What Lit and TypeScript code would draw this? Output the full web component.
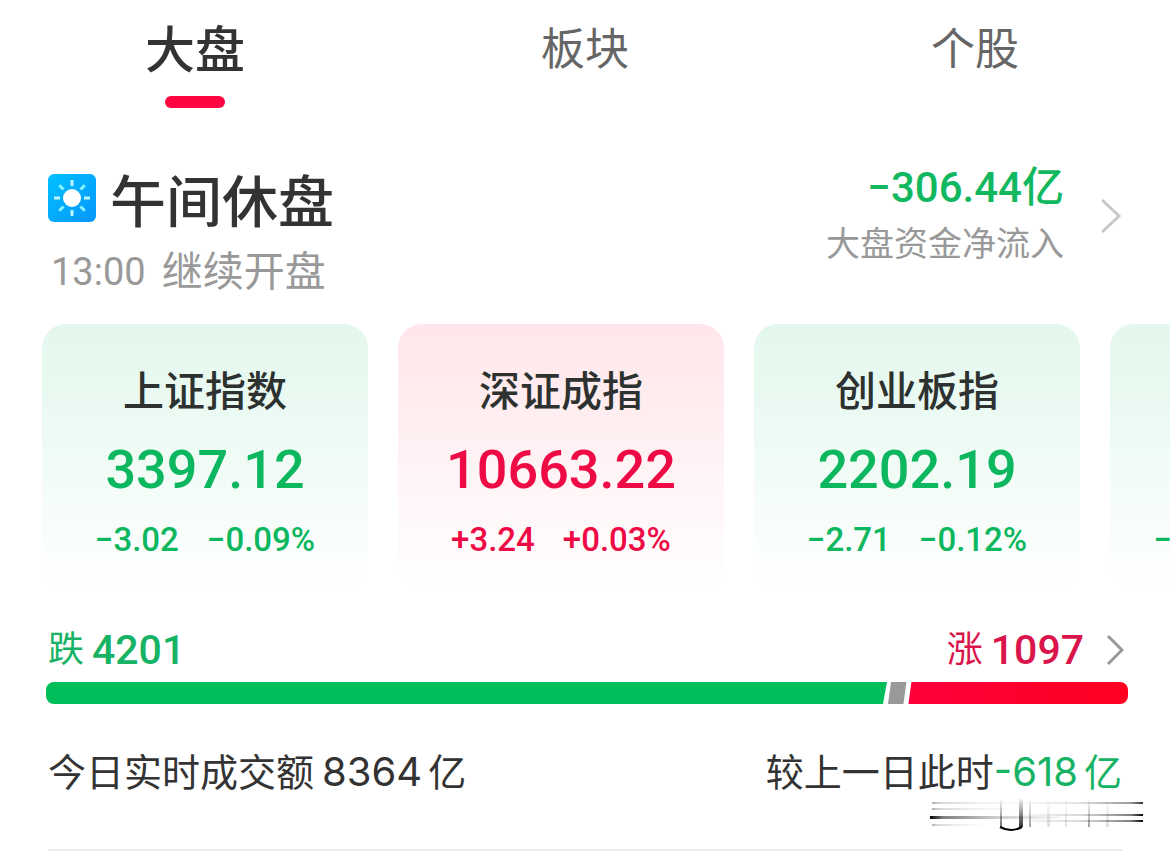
import { LitElement, html, css, svg } from "lit";
import { customElement, property, state } from "lit/decorators.js";
import { classMap } from "lit/directives/class-map.js";
import { styleMap } from "lit/directives/style-map.js";

interface MarketIndex {
  name: string;
  value: string;
  change: string;
  percent: string;
  rising: boolean;
}

const INDICES: MarketIndex[] = [
  { name: "上证指数", value: "3397.12", change: "−3.02", percent: "−0.09%", rising: false },
  { name: "深证成指", value: "10663.22", change: "+3.24", percent: "+0.03%", rising: true },
  { name: "创业板指", value: "2202.19", change: "−2.71", percent: "−0.12%", rising: false },
  { name: "北证50", value: "1409.52", change: "−13.26", percent: "−0.93%", rising: false },
];

const TABS = ["大盘", "板块", "个股"];

@customElement("index-card")
export class IndexCard extends LitElement {
  @property({ attribute: false }) item!: MarketIndex;

  static styles = css`
    :host {
      display: block;
      flex: 0 0 326px;
    }
    .card {
      display: flex;
      flex-direction: column;
      align-items: center;
      box-sizing: border-box;
      padding: 40px 0 30px;
      border-radius: 24px;
      color: #0db75f;
      background: linear-gradient(#e4f7ed, #eafaf2 30%, #ffffff);
      font-family: Roboto, "Noto Sans CJK SC", sans-serif;
      font-weight: 500;
      white-space: nowrap;
    }
    .card.rising {
      color: #ee0a45;
      background: linear-gradient(#ffe6ea, #ffedf0 30%, #ffffff);
    }
    .name {
      margin: 0;
      font-family: "Noto Sans CJK SC", sans-serif;
      font-size: 41px;
      line-height: 48px;
      font-weight: 500;
      color: #2d3230;
    }
    .value {
      margin-top: 28px;
      font-size: 54px;
      line-height: 60px;
    }
    .delta {
      display: flex;
      gap: 28px;
      margin-top: 20px;
      font-size: 33px;
      line-height: 40px;
    }
  `;

  render() {
    const { name, value, change, percent, rising } = this.item;
    return html`
      <article class=${classMap({ card: true, rising })}>
        <h2 class="name">${name}</h2>
        <div class="value">${value}</div>
        <div class="delta"><span>${change}</span><span>${percent}</span></div>
      </article>
    `;
  }
}

@customElement("breadth-bar")
export class BreadthBar extends LitElement {
  @property({ type: Number }) falling = 0;
  @property({ type: Number }) flat = 0;
  @property({ type: Number }) rising = 0;

  static styles = css`
    :host {
      display: block;
    }
    .bar {
      display: flex;
      gap: 1px;
      height: 22px;
      border-radius: 8px;
      overflow: hidden;
    }
    .segment {
      flex-basis: 0;
    }
    .falling {
      background: #00be5a;
      clip-path: polygon(0 0, 100% 0, calc(100% - 4px) 100%, 0 100%);
    }
    .flat {
      background: #999999;
      clip-path: polygon(3px 0, calc(100% - 1px) 0, calc(100% - 4px) 100%, 0 100%);
    }
    .rising {
      background: linear-gradient(90deg, #ff003c, #ff0020);
      clip-path: polygon(3px 0, 100% 0, 100% 100%, 0 100%);
    }
  `;

  render() {
    return html`
      <div class="bar">
        <div class="segment falling" style=${styleMap({ flexGrow: String(this.falling) })}></div>
        <div class="segment flat" style=${styleMap({ flexGrow: String(this.flat) })}></div>
        <div class="segment rising" style=${styleMap({ flexGrow: String(this.rising) })}></div>
      </div>
    `;
  }
}

@customElement("app-root")
export class AppRoot extends LitElement {
  @state() private active = 0;

  static styles = css`
    :host {
      display: block;
      position: relative;
      overflow: hidden;
      background: #ffffff;
      color: #333333;
      font-family: Roboto, "Noto Sans CJK SC", sans-serif;
    }
    button {
      padding: 0;
      border: 0;
      background: none;
      color: inherit;
      font: inherit;
      cursor: pointer;
    }
    .tabs {
      display: flex;
    }
    .tab {
      display: flex;
      flex: 1;
      flex-direction: column;
      align-items: center;
      gap: 4px;
      font-family: "Noto Sans CJK SC", sans-serif;
      font-size: 44px;
      line-height: 92px;
      color: #666666;
    }
    .tab.active {
      font-size: 50px;
      font-weight: 500;
      color: #333333;
    }
    .tab.active::after {
      content: "";
      width: 60px;
      height: 12px;
      border-radius: 6px;
      background: #ff0541;
    }
    .summary {
      display: flex;
      align-items: flex-start;
      justify-content: space-between;
      padding: 58px 48px 0;
    }
    .heading {
      display: flex;
      align-items: center;
      gap: 14px;
    }
    .sun {
      display: block;
      width: 48px;
      height: 48px;
    }
    .title {
      margin: 0;
      font-family: "Noto Sans CJK SC", sans-serif;
      font-size: 56px;
      line-height: 64px;
      font-weight: 500;
    }
    .resume {
      display: flex;
      gap: 16px;
      margin: 16px 0 0 3px;
      font-size: 41px;
      line-height: 52px;
      color: #999999;
    }
    .clock {
      font-size: 38px;
    }
    .flow {
      display: flex;
      align-items: center;
      gap: 36px;
      text-align: right;
    }
    .amount,
    .caption {
      display: block;
      line-height: 44px;
    }
    .amount {
      font-size: 42px;
      font-weight: 500;
      color: #12b85f;
    }
    .caption {
      margin-top: 12px;
      font-size: 34px;
      color: #999999;
    }
    .chevron {
      display: block;
      fill: none;
      stroke-width: 3;
    }
    .pale {
      width: 22px;
      height: 38px;
      stroke: #c8c8c8;
    }
    .grey {
      width: 18px;
      height: 34px;
      stroke: #999999;
    }
    .cards {
      display: flex;
      gap: 30px;
      padding: 26px 0 0 42px;
      overflow: hidden;
    }
    .breadth {
      padding: 36px 42px 0 46px;
    }
    .counts {
      display: flex;
      align-items: center;
      justify-content: space-between;
      margin-bottom: 8px;
      padding: 0 4px 0 2px;
      font-size: 36px;
      line-height: 48px;
    }
    .count {
      display: flex;
      align-items: center;
      gap: 8px;
    }
    .number {
      font-size: 41px;
      font-weight: 500;
    }
    .down {
      color: #16b364;
    }
    .up {
      color: #d9154b;
    }
    .more {
      display: flex;
      align-items: center;
      gap: 22px;
    }
    .turnover {
      display: flex;
      justify-content: space-between;
      margin: 44px 48px 0;
      padding-bottom: 53px;
      border-bottom: 2px solid #ececec;
      font-family: Inter, "Noto Sans CJK SC", sans-serif;
      font-size: 38px;
      line-height: 48px;
    }
    .sum {
      margin: 0 6px 0 8px;
      font-size: 40px;
    }
    .diff {
      margin-right: 6px;
      font-size: 40px;
    }
    .mark {
      position: absolute;
      right: 24px;
      bottom: 18px;
      width: 216px;
      height: 34px;
    }
  `;

  private renderSun() {
    const rays = [0, 45, 90, 135, 180, 225, 270, 315];
    return html`
      <svg class="sun" viewBox="0 0 48 48" aria-hidden="true">
        <defs>
          <linearGradient id="sky" x1="0" y1="0" x2="1" y2="1">
            <stop offset="0" stop-color="#00c0ff" />
            <stop offset="1" stop-color="#0696fa" />
          </linearGradient>
        </defs>
        <rect width="48" height="48" rx="6" fill="url(#sky)" />
        ${rays.map(
          (angle) => svg`<path
            d="M24 6v6"
            stroke=${angle % 90 ? "#8cf4ff" : "#b8f7ff"}
            stroke-width="3"
            transform="rotate(${angle} 24 24)"
          />`
        )}
        <circle cx="24" cy="24" r="9" fill="#ffffff" />
      </svg>
    `;
  }

  private renderMark() {
    return html`
      <svg class="mark" viewBox="0 0 216 34" fill="none" aria-hidden="true">
        <defs>
          <linearGradient id="left" x1="0" x2="1">
            <stop offset="0" stop-color="#000" />
            <stop offset="0.1" stop-color="#000" stop-opacity="0.5" />
            <stop offset="0.5" stop-color="#000" stop-opacity="0.2" />
            <stop offset="1" stop-color="#000" stop-opacity="0.03" />
          </linearGradient>
          <linearGradient id="right" x1="1" x2="0">
            <stop offset="0" stop-color="#000" />
            <stop offset="0.1" stop-color="#000" stop-opacity="0.5" />
            <stop offset="0.5" stop-color="#000" stop-opacity="0.15" />
            <stop offset="1" stop-color="#000" stop-opacity="0.02" />
          </linearGradient>
          <linearGradient id="fall" x1="0" y1="0" x2="0" y2="1">
            <stop offset="0" stop-color="#000" stop-opacity="0.05" />
            <stop offset="1" stop-color="#000" stop-opacity="0.8" />
          </linearGradient>
        </defs>
        <rect x="0" y="17" width="130" height="3" fill="url(#left)" />
        <g opacity="0.3">
          <rect x="2" y="3" width="90" height="2" fill="url(#left)" />
          <rect x="2" y="9" width="80" height="2" fill="url(#left)" />
          <rect x="2" y="25" width="50" height="2" fill="url(#left)" />
        </g>
        <rect x="90" y="3" width="123" height="2" fill="url(#right)" opacity="0.8" />
        <rect x="90" y="15" width="123" height="2" fill="url(#right)" />
        <rect x="90" y="21" width="123" height="2" fill="url(#right)" />
        <rect x="70" y="1" width="2" height="27" fill="url(#fall)" opacity="0.7" />
        <rect x="89" y="0" width="4" height="28" fill="url(#fall)" />
        <g opacity="0.45">
          <rect x="99" y="1" width="2" height="27" fill="url(#fall)" />
          <rect x="158" y="1" width="2" height="27" fill="url(#fall)" />
        </g>
        <g opacity="0.15">
          <rect x="117" y="1" width="3" height="27" fill="url(#fall)" />
          <rect x="135" y="1" width="2" height="27" fill="url(#fall)" />
          <rect x="176" y="1" width="3" height="27" fill="url(#fall)" />
        </g>
        <path d="M70 28Q81 34 92 28" stroke="#000" stroke-width="2" />
      </svg>
    `;
  }

  render() {
    return html`
      <nav class="tabs" role="tablist">
        ${TABS.map(
          (tab, i) => html`<button
            class=${classMap({ tab: true, active: i === this.active })}
            role="tab"
            aria-selected=${i === this.active}
            @click=${() => (this.active = i)}
          >${tab}</button>`
        )}
      </nav>

      <section class="summary">
        <div>
          <div class="heading">${this.renderSun()}<h1 class="title">午间休盘</h1></div>
          <div class="resume"><time class="clock">13:00</time><span>继续开盘</span></div>
        </div>
        <button class="flow">
          <span>
            <span class="amount">−306.44亿</span>
            <span class="caption">大盘资金净流入</span>
          </span>
          <svg class="chevron pale" viewBox="0 0 22 38" aria-hidden="true"><path d="M2 3L19 19L2 35" /></svg>
        </button>
      </section>

      <section class="cards">
        ${INDICES.map((item) => html`<index-card .item=${item}></index-card>`)}
      </section>

      <section class="breadth">
        <div class="counts">
          <div class="count down">跌<span class="number">4201</span></div>
          <button class="more">
            <span class="count up">涨<span class="number">1097</span></span>
            <svg class="chevron grey" viewBox="0 0 18 34" aria-hidden="true"><path d="M2 3L16 17L2 31" /></svg>
          </button>
        </div>
        <breadth-bar falling="4201" flat="97" rising="1097"></breadth-bar>
      </section>

      <section class="turnover">
        <span>今日实时成交额<span class="sum">8364</span>亿</span>
        <span>较上一日此时<span class="down"><span class="diff">-618</span>亿</span></span>
      </section>
      ${this.renderMark()}
    `;
  }
}
